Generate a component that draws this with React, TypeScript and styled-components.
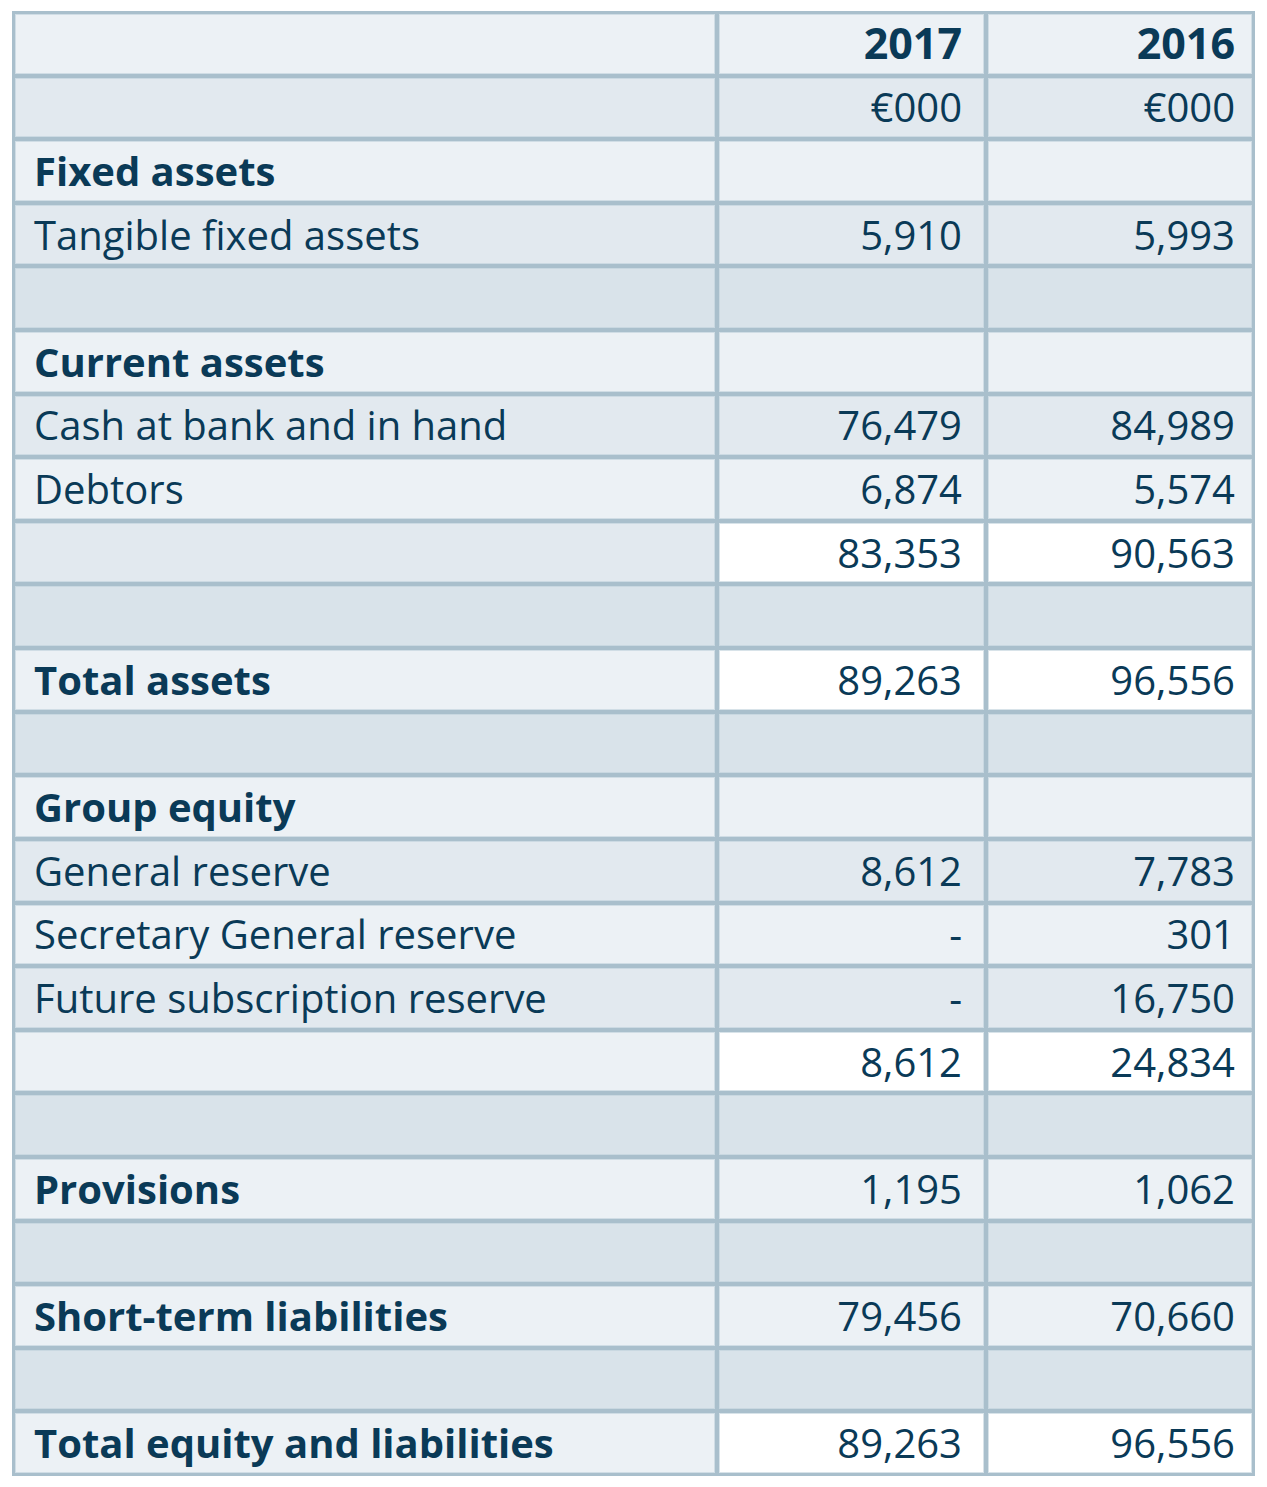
import React from "react";
import styled, { createGlobalStyle, css } from "styled-components";

const GlobalStyle = createGlobalStyle`
  html, body { margin: 0; padding: 0; background: #ffffff; }
  body { font-family: "Open Sans", "Noto Sans", sans-serif; }
`;

type Tone = "light" | "mid" | "dark" | "white";

const toneColor: Record<Tone, string> = {
  light: "#ecf1f5",
  mid: "#e2e9ef",
  dark: "#d9e3ea",
  white: "#ffffff",
};

const Page = styled.div`
  padding: 11px 12px 11px 12px;
`;

const Table = styled.div`
  display: grid;
  grid-template-columns: 700px 265px 264px;
  grid-template-rows: repeat(23, 1fr);
  gap: 4px;
  padding: 3px;
  width: 1243px;
  height: 1465px;
  box-sizing: border-box;
  background: #a9bfcc;
`;

const Cell = styled.div<{ $tone: Tone; $align: "left" | "right"; $bold?: boolean; $big?: boolean; $pr?: number }>`
  display: flex;
  align-items: center;
  justify-content: ${(p) => (p.$align === "left" ? "flex-start" : "flex-end")};
  background: ${(p) => toneColor[p.$tone]};
  color: #0a3a57;
  font-size: ${(p) => (p.$big ? 43 : 40)}px;
  line-height: 1;
  font-weight: ${(p) => (p.$bold ? 700 : 400)};
  white-space: nowrap;
  box-shadow: inset 0 0 0 1px rgba(190, 208, 219, 0.6);
  ${(p) =>
    p.$align === "left"
      ? css`padding-left: 19px;`
      : css`padding-right: ${p.$pr ?? 20}px;`}
  ${(p) => p.$big && css`padding-bottom: 2px;`}
`;

type Row = {
  label?: string;
  a?: string;
  b?: string;
  tone: Tone;
  labelBold?: boolean;
  header?: boolean;
  whiteValues?: boolean;
};

const rows: Row[] = [
  { a: "2017", b: "2016", tone: "light", header: true },
  { a: "€000", b: "€000", tone: "mid" },
  { label: "Fixed assets", tone: "light", labelBold: true },
  { label: "Tangible fixed assets", a: "5,910", b: "5,993", tone: "mid" },
  { tone: "dark" },
  { label: "Current assets", tone: "light", labelBold: true },
  { label: "Cash at bank and in hand", a: "76,479", b: "84,989", tone: "mid" },
  { label: "Debtors", a: "6,874", b: "5,574", tone: "light" },
  { a: "83,353", b: "90,563", tone: "mid", whiteValues: true },
  { tone: "dark" },
  { label: "Total assets", a: "89,263", b: "96,556", tone: "light", labelBold: true, whiteValues: true },
  { tone: "dark" },
  { label: "Group equity", tone: "light", labelBold: true },
  { label: "General reserve", a: "8,612", b: "7,783", tone: "mid" },
  { label: "Secretary General reserve", a: "-", b: "301", tone: "light" },
  { label: "Future subscription reserve", a: "-", b: "16,750", tone: "mid" },
  { a: "8,612", b: "24,834", tone: "light", whiteValues: true },
  { tone: "dark" },
  { label: "Provisions", a: "1,195", b: "1,062", tone: "light", labelBold: true },
  { tone: "dark" },
  { label: "Short-term liabilities", a: "79,456", b: "70,660", tone: "light", labelBold: true },
  { tone: "dark" },
  { label: "Total equity and liabilities", a: "89,263", b: "96,556", tone: "light", labelBold: true, whiteValues: true },
];

export default function App() {
  return (
    <Page>
      <GlobalStyle />
      <Table>
        {rows.map((r, i) => {
          const vt: Tone = r.whiteValues ? "white" : r.tone;
          return (
            <React.Fragment key={i}>
              <Cell $tone={r.tone} $align="left" $bold={r.labelBold}>
                {r.label ?? ""}
              </Cell>
              <Cell $tone={vt} $align="right" $bold={r.header} $big={r.header} $pr={22}>
                {r.a ?? ""}
              </Cell>
              <Cell $tone={vt} $align="right" $bold={r.header} $big={r.header} $pr={17}>
                {r.b ?? ""}
              </Cell>
            </React.Fragment>
          );
        })}
      </Table>
    </Page>
  );
}
